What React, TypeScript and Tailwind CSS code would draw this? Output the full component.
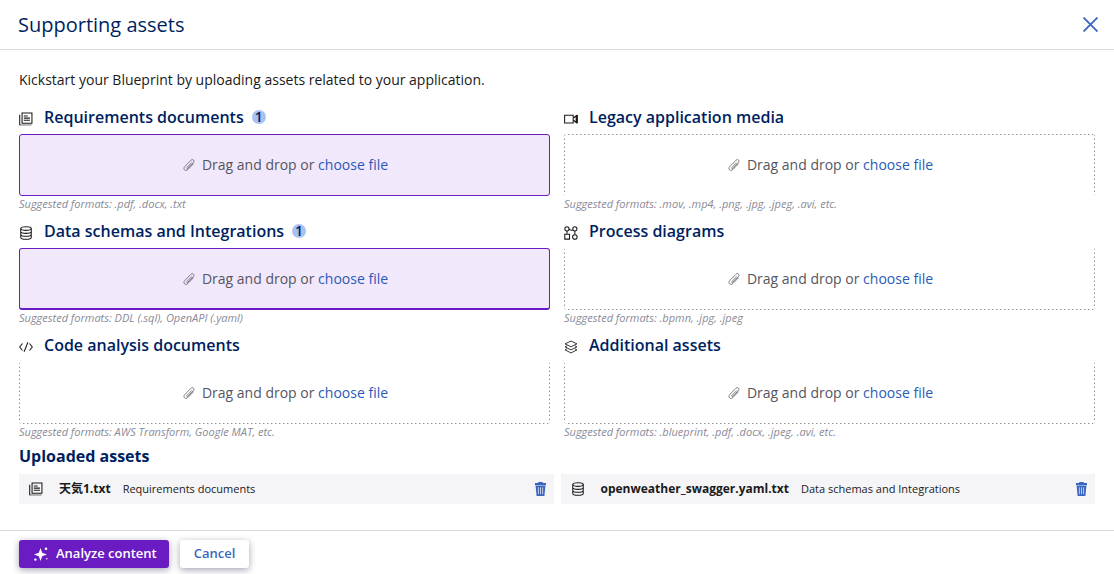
import type { ReactNode } from "react";

function Svg({ className, children }: { className: string; children: ReactNode }) {
  return (
    <svg viewBox="0 0 16 16" className={className} fill="none" stroke="currentColor" strokeWidth="1.2" aria-hidden="true">
      {children}
    </svg>
  );
}

const glyphs = {
  documents: (
    <>
      <path d="M3.5 1.2h11.3v11.6H3.5z" />
      <path d="M5.5 4.5h4.5M5.5 7h7M5.5 9.5h7" />
      <path d="M.8 3v12.2" />
      <path d="M.8 14.8h13.5" strokeOpacity=".35" strokeWidth="2" />
    </>
  ),
  database: (
    <>
      <ellipse cx="8" cy="2.9" rx="6" ry="2.1" />
      <path d="M2 2.9v10.2c0 1.2 2.7 2.1 6 2.1s6-.9 6-2.1V2.9M2 6.3c0 1.2 2.7 2.1 6 2.1s6-.9 6-2.1M2 9.7c0 1.2 2.7 2.1 6 2.1s6-.9 6-2.1" />
    </>
  ),
  code: <path d="M4 4 .8 8 4 12M12 4l3.2 4-3.2 4M10.2 2.5l-4.4 11" />,
  video: (
    <>
      <path d="M.7 3.7h9.8v8.8H.7z" />
      <path d="M10.8 6.8 14 4.2v7.8l-3.2-2.6M15.2 3.4v9.4" strokeWidth="1.4" />
    </>
  ),
  process: (
    <>
      <circle cx="3.4" cy="3.2" r="2.4" />
      <circle cx="12.4" cy="3.2" r="2.4" />
      <circle cx="12.4" cy="12.6" r="2.6" />
      <path d="M.9 9.4h5.4v5.6H.9zM3.4 5.6v3.8M5.6 3.8c2 0 2 2.2 4.4.6M12.4 5.6V10" />
    </>
  ),
  layers: (
    <path
      d="m8 1.2 6.8 3.2L8 7.8 1.2 4.4zM3.6 6.6 1.2 7.9 8 11.3l6.8-3.4-2.4-1.3M3.6 10 1.2 11.3 8 14.8l6.8-3.5L12.4 10"
      strokeWidth="1"
    />
  ),
};

type Glyph = keyof typeof glyphs;

interface Category {
  id: string;
  title: string;
  icon: Glyph;
  formats: string;
  count?: number;
  edges: string;
}

const filled = "rounded-[3px] border border-[#6a1cc2] bg-[#f2e8fb]";
const filledHeavy = "rounded-[3px] border border-b-2 border-[#6a1cc2] bg-[#f2e8fb]";
const openBottom =
  "rounded-[3px] bg-[repeating-linear-gradient(90deg,#8a8a98_0_1px,#d0d0d8_1px_2px,transparent_2px_4px),repeating-linear-gradient(0deg,#8a8a98_0_1px,#d0d0d8_1px_2px,transparent_2px_4px),repeating-linear-gradient(0deg,#8a8a98_0_1px,#d0d0d8_1px_2px,transparent_2px_4px)] bg-[length:100%_1px,1px_100%,1px_100%] bg-[position:top,left,right] bg-no-repeat";
const openTop =
  "rounded-[3px] bg-[repeating-linear-gradient(90deg,#8a8a98_0_1px,#d0d0d8_1px_2px,transparent_2px_4px),repeating-linear-gradient(0deg,#8a8a98_0_1px,#d0d0d8_1px_2px,transparent_2px_4px),repeating-linear-gradient(0deg,#8a8a98_0_1px,#d0d0d8_1px_2px,transparent_2px_4px)] bg-[length:100%_1px,1px_100%,1px_100%] bg-[position:bottom,left,right] bg-no-repeat";

const categories: Category[] = [
  { id: "requirements", title: "Requirements documents", icon: "documents", formats: ".pdf, .docx, .txt", count: 1, edges: filled },
  { id: "media", title: "Legacy application media", icon: "video", formats: ".mov, .mp4, .png, .jpg, .jpeg, .avi, etc.", edges: openBottom },
  { id: "data", title: "Data schemas and Integrations", icon: "database", formats: "DDL (.sql), OpenAPI (.yaml)", count: 1, edges: filledHeavy },
  { id: "process", title: "Process diagrams", icon: "process", formats: ".bpmn, .jpg, .jpeg", edges: openTop },
  { id: "code", title: "Code analysis documents", icon: "code", formats: "AWS Transform, Google MAT, etc.", edges: openTop },
  { id: "additional", title: "Additional assets", icon: "layers", formats: ".blueprint, .pdf, .docx, .jpeg, .avi, etc.", edges: openTop },
];

const uploads: { name: string; category: string; icon: Glyph }[] = [
  { name: "天気1.txt", category: "Requirements documents", icon: "documents" },
  { name: "openweather_swagger.yaml.txt", category: "Data schemas and Integrations", icon: "database" },
];

function UploadZone({ category }: { category: Category }) {
  return (
    <section>
      <h2 className="flex h-7 items-start text-[16px] leading-[22px] font-semibold text-[#001f5f]">
        <Svg className="mt-[6px] mr-[11px] size-[14px] shrink-0 text-[#1a1a1a]">{glyphs[category.icon]}</Svg>
        <span>{category.title}</span>
        {category.count && (
          <span className="mt-1 ml-2 flex size-[14px] items-center justify-center rounded-full bg-[#a9c1f2] text-[14px] leading-none">
            {category.count}
          </span>
        )}
      </h2>
      <div className={`flex h-[62px] items-center justify-center pl-[2px] text-[14px] leading-5 text-[#55555f] ${category.edges}`}>
        <Svg className="mr-[7px] size-3 shrink-0">
          <path
            d="m11.8 4.6-6.4 6.6c-1 1-.1 2.3 1.1 1.2l7.3-7.5c2.4-2.6-.8-5.6-3.3-3.1L2.4 10c-3.2 3.4 1 7.2 4.1 4l7.6-7.8"
            strokeWidth="1"
          />
        </Svg>
        <span>
          Drag and drop or{" "}
          <label htmlFor={category.id} className="cursor-pointer text-[#295ab8]">
            choose file
          </label>
        </span>
        <input id={category.id} type="file" className="sr-only" />
      </div>
      <p className="h-6 text-[11px] leading-4 text-[#8a8a98] italic">Suggested formats: {category.formats}</p>
    </section>
  );
}

export default function App() {
  return (
    <main className="flex min-h-screen flex-col bg-white font-['Open_Sans','Noto_Sans_CJK_JP',sans-serif] text-[#1a1a1a]">
      <header className="flex h-[50px] items-center justify-between border-b border-[#dcdce0] pr-4 pl-[18px]">
        <h1 className="text-[20px] leading-7 text-[#001f5f]">Supporting assets</h1>
        <button type="button" aria-label="Close" className="text-[#3a66c0]">
          <svg viewBox="0 0 14 14" className="size-[15px]" stroke="currentColor" strokeWidth="1.7" aria-hidden="true">
            <path d="m.5.5 13 13m0-13-13 13" />
          </svg>
        </button>
      </header>

      <div className="px-[19px] pt-5">
        <p className="text-[14px] leading-5">Kickstart your Blueprint by uploading assets related to your application.</p>
        <div className="mt-4 grid grid-cols-2 gap-x-[14px]">
          {categories.map((category) => (
            <UploadZone key={category.id} category={category} />
          ))}
        </div>
        <h2 className="text-[16px] leading-4 font-bold text-[#001f5f]">Uploaded assets</h2>
        <ul className="mt-[10px] grid grid-cols-2 gap-x-[7px]">
          {uploads.map((file) => (
            <li key={file.name} className="flex h-[30px] items-center bg-[#f5f5f8] pr-2 pl-[10px]">
              <Svg className="mr-4 size-[14px] shrink-0">{glyphs[file.icon]}</Svg>
              <span className="text-[12px] leading-5 font-bold">{file.name}</span>
              <span className="ml-3 text-[11px]">{file.category}</span>
              <button type="button" aria-label={`Delete ${file.name}`} className="ml-auto text-[#3a66c0]">
                <svg viewBox="0 0 11 14" className="h-[14px] w-[11px]" fill="currentColor" aria-hidden="true">
                  <path d="M0 1h3L3.5 0h4L8 1h3v2.2H0zM.6 3.7h9.8L9.4 14H1.6z" />
                  <path d="M3.4 5.3v6.9M5.5 5.3v6.9M7.6 5.3v6.9" stroke="#f5f5f8" strokeWidth=".7" />
                </svg>
              </button>
            </li>
          ))}
        </ul>
      </div>

      <footer className="mt-[26px] flex h-11 gap-[11px] border-t border-[#dadae2] px-[19px] pt-[9px]">
        <button type="button" className="flex h-7 items-center rounded-[3px] bg-[#6a1cc2] pr-3 pl-[14px] text-[13px] font-semibold text-white shadow-[0_2px_7px_rgba(30,30,70,0.4)]">
          <svg viewBox="0 0 16 16" className="mr-[7px] size-4" fill="currentColor" aria-hidden="true">
            <path d="M7.5 2 9.2 6.8 14 8.5 9.2 10.2 7.5 15 5.8 10.2 1 8.5l4.8-1.7z" />
            <circle cx="13" cy="2.8" r="1.3" />
            <circle cx="2.4" cy="13.6" r="1.2" />
            <circle cx="13.8" cy="12.8" r=".8" />
          </svg>
          Analyze content
        </button>
        <button type="button" className="h-7 rounded-[3px] bg-white px-[14px] text-[13px] font-semibold text-[#3a66c0] shadow-[0_2px_7px_rgba(30,30,70,0.4)]">
          Cancel
        </button>
      </footer>
    </main>
  );
}
